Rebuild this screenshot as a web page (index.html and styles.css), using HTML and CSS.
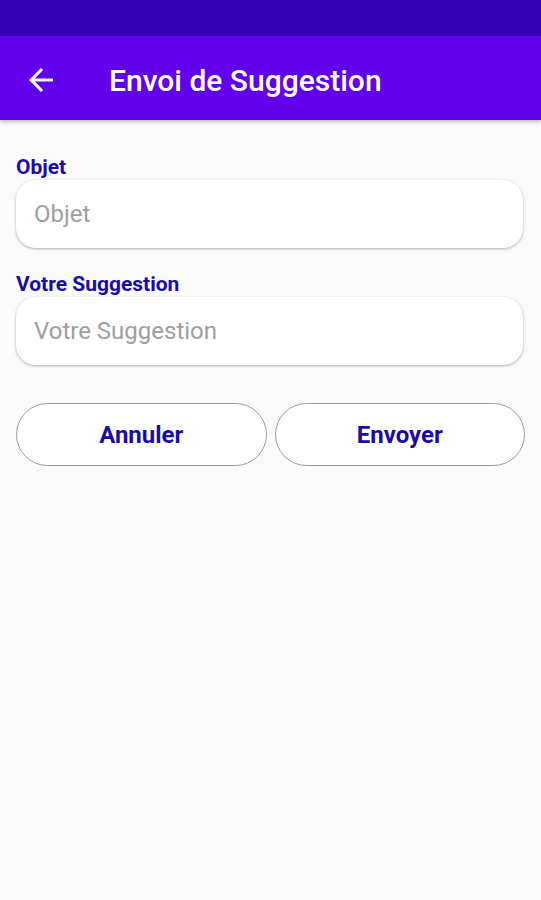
FILE: index.html
```html
<!DOCTYPE html>
<html lang="fr">
<head>
    <meta charset="UTF-8">
    <meta name="viewport" content="width=device-width, initial-scale=1.0">
    <title>Envoi de Suggestion</title>
    <link rel="stylesheet" href="styles.css">
</head>
<body>
    <div class="status-bar"></div>
    <div class="app-bar">
        <svg class="back" width="36" height="36" viewBox="0 0 24 24">
            <path d="M20 11H7.83l5.59-5.59L12 4l-8 8 8 8 1.41-1.41L7.83 13H20v-2z" fill="#fff"/>
        </svg>
        <h1>Envoi de Suggestion</h1>
    </div>
    <form class="content">
        <label for="objet">Objet</label>
        <input type="text" id="objet" placeholder="Objet">
        <label for="suggestion">Votre Suggestion</label>
        <input type="text" id="suggestion" placeholder="Votre Suggestion">
        <div class="actions">
            <button type="button">Annuler</button>
            <button type="submit">Envoyer</button>
        </div>
    </form>
</body>
</html>
```

FILE: styles.css
```css
body {
    font-family: Roboto, "Noto Sans", sans-serif;
    margin: 0;
    padding: 0;
    background-color: #fafafa;
    height: 900px;
}
.status-bar {
    height: 36px;
    background: #3700b3;
}
.app-bar {
    height: 84px;
    box-sizing: border-box;
    background: #6200ee;
    display: flex;
    align-items: center;
    padding: 4px 0 0 23px;
    box-shadow: 0 2px 4px rgba(0, 0, 0, 0.25);
}
.back {
    margin-right: 50px;
}
h1 {
    margin: 0;
    color: #fff;
    font-size: 30px;
    font-weight: 500;
}
.content {
    padding: 36px 16px 0 16px;
    display: flex;
    flex-direction: column;
}
label {
    color: #1c0aa6;
    font-weight: bold;
    font-size: 21px;
    line-height: 22px;
    margin-bottom: 2px;
}
input {
    height: 68px;
    box-sizing: border-box;
    width: 507px;
    border: none;
    border-radius: 20px;
    background: #fff;
    box-shadow: 0 1px 3px rgba(0, 0, 0, 0.3);
    padding: 0 18px;
    font-family: Roboto, sans-serif;
    font-size: 24px;
    margin-bottom: 25px;
    outline: none;
}
input::placeholder {
    color: #9e9e9e;
}
.actions {
    display: flex;
    gap: 8px;
    margin-top: 13px;
}
button {
    width: 251px;
    height: 63px;
    border: 1px solid #9a9a9a;
    border-radius: 32px;
    background: #fff;
    color: #1c0aa6;
    font-family: Roboto, sans-serif;
    font-weight: bold;
    font-size: 24px;
}
```
